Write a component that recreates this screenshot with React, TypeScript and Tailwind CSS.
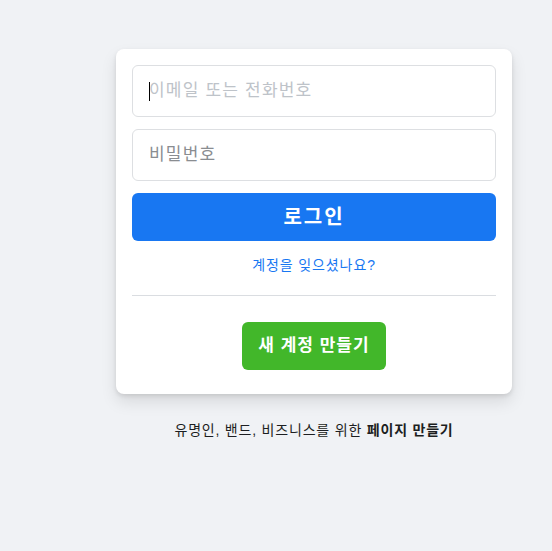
export default function App() {
  return (
    <div
      className="min-h-[551px] bg-[#f0f2f5] pl-[116px] pt-[49px]"
      style={{ fontFamily: '"Liberation Sans", "Noto Sans CJK KR", sans-serif' }}
    >
      <div className="w-[396px]">
        <div className="flex flex-col rounded-lg bg-white p-4 pb-6 shadow-[0_2px_4px_rgba(0,0,0,0.1),0_8px_16px_rgba(0,0,0,0.1)]">
          <div className="relative">
            <input
              type="text"
              placeholder="이메일 또는 전화번호"
              className="h-[52px] w-full rounded-md border border-[#dddfe2] px-4 text-[17px] tracking-[1.2px] text-[#1d2129] caret-transparent outline-none placeholder:text-[#bec3c9]"
            />
            {/* text cursor shown in the screenshot */}
            <span className="pointer-events-none absolute left-[17px] top-[17px] h-[19px] w-px bg-black" />
          </div>
          <input
            type="password"
            placeholder="비밀번호"
            className="mt-3 h-[52px] w-full rounded-md border border-[#dddfe2] px-4 text-[17px] tracking-[1.2px] text-[#1d2129] outline-none placeholder:text-[#8a8d91]"
          />
          <button
            type="button"
            className="mt-3 h-12 w-full rounded-md bg-[#1877f2] text-[20px] font-bold tracking-[2px] text-white"
          >
            로그인
          </button>
          <a href="#" className="mt-[15px] text-center text-sm leading-[19px] tracking-[0.9px] text-[#1877f2]">
            계정을 잊으셨나요?
          </a>
          <div className="mt-5 border-b border-[#dadde1]" />
          <div className="flex justify-center pt-[26px]">
            <button
              type="button"
              className="h-12 rounded-md bg-[#42b72a] px-4 text-[17px] font-bold tracking-[1px] text-white"
            >
              새 계정 만들기
            </button>
          </div>
        </div>
        <p className="mt-[26px] text-center text-sm tracking-[0.8px] text-[#1c1e21]">
          <a href="#">
            유명인, 밴드, 비즈니스를 위한 <b className="font-bold">페이지 만들기</b>
          </a>
        </p>
      </div>
    </div>
  );
}
